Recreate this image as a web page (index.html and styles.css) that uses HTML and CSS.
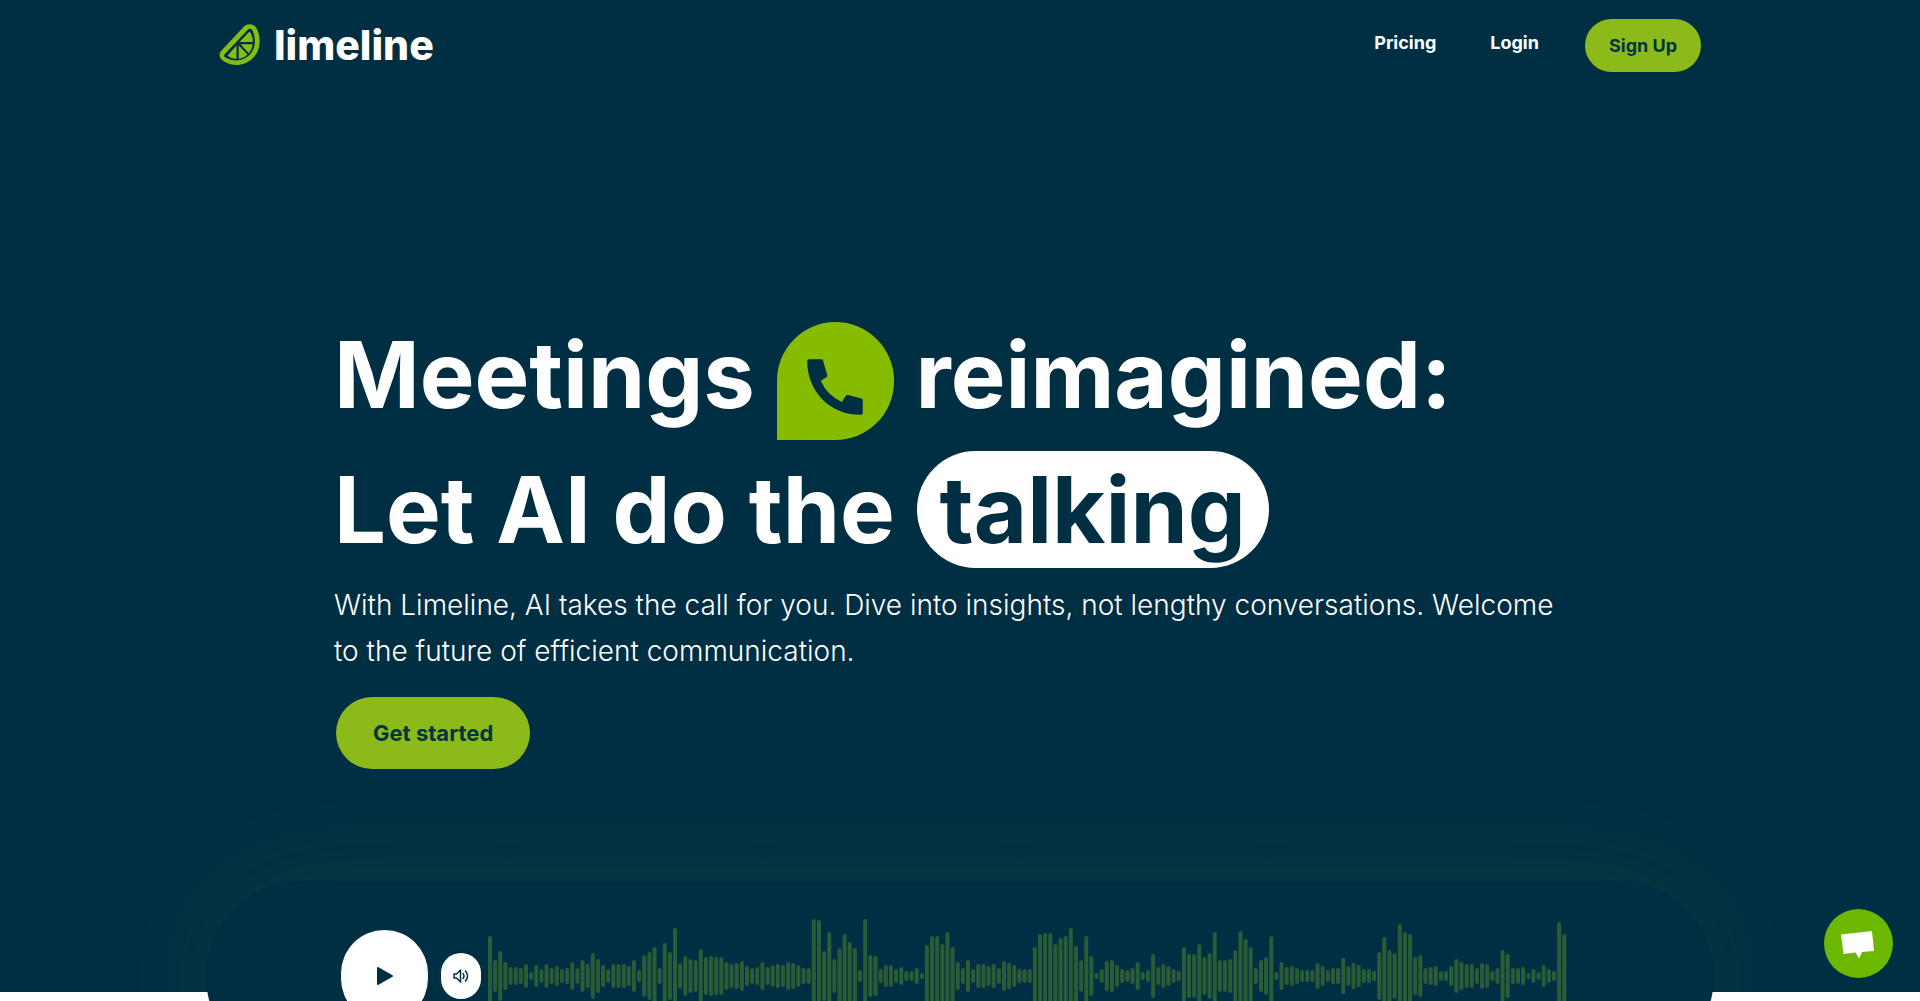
FILE: index.html
```html
<!DOCTYPE html>
<html lang="en">
<head>
    <meta charset="UTF-8">
    <meta name="viewport" content="width=device-width, initial-scale=1.0">
    <title>Limeline</title>

    <link rel="stylesheet" href="styles.css">
    <script src="waveform.js" defer></script>
</head>
<body>

    <header class="header">
        <a class="logo" href="#">
            <svg class="logo-icon" viewBox="0 0 42 42" aria-hidden="true">
                <path class="lime" d="M3 26 25 2.500C29-1 35-.5 38 5c4.500 10 3.500 22-4 29-8 8-19 9-28 4-6-3-7-8-3-12z"/>
                <path class="dark" d="M6 30 29 5.500C30.500 4 32.500 4.500 33.500 6.500c4 9 3 18-3 24.500-6 6-15.500 7-23 3C5 33 4.500 31.500 6 30z"/>
                <path class="lime" d="M20.500 18 30.500 7.500c2.500 3 3.500 7 3.300 10.500zM21.500 20.200H33.600c-.3 3.500-1.700 6.500-3.800 9zM17.500 21.500V34.800c-3.500 0-6.500-.8-9-3.300zM19.700 21.500l8.800 9c-2.500 2.500-5.500 4-8.800 4.300z"/>
            </svg>
            <span class="logo-text">limeline</span>
        </a>
        <nav class="nav">
            <a class="nav-link" href="#">Pricing</a>
            <a class="nav-link" href="#">Login</a>
            <a class="btn btn-small" href="#">Sign Up</a>
        </nav>
    </header>

    <main>
        <section class="hero">
            <h1>
                Meetings
                <span class="bubble"><svg viewBox="0 0 24 24" aria-hidden="true"><path d="M3.600 3H7.600Q8 3 8.100 3.400L9.500 8.200Q9.600 8.600 9.200 8.800L7.400 10Q9.500 14.800 14.200 16.900L15.500 14.900Q15.700 14.500 16.200 14.600L20.600 15.700Q21 15.800 21 16.200V20.400Q21 21 20.300 21C10 21 3 13 3 3.700Q3 3 3.600 3z"/></svg></span>
                reimagined:<br>
                Let AI do the <span class="pill">talking</span>
            </h1>
            <p class="lead">With Limeline, AI takes the call for you. Dive into insights, not lengthy conversations. Welcome to the future of efficient communication.</p>
            <button class="btn btn-large" type="button">Get started</button>
        </section>

        <section class="player">
            <button class="play" type="button" aria-label="Play">
                <svg viewBox="0 0 16 18" aria-hidden="true"><path d="M1 1v16l14-8z"/></svg>
            </button>
            <button class="volume" type="button" aria-label="Volume">
                <svg viewBox="0 0 16 14" aria-hidden="true"><path d="M1 5v4h2.500L7.500 13V1L3.500 5zM10 4.500q2 2.500 0 5M12.500 2q4 5 0 10"/></svg>
            </button>
            <svg class="wave" viewBox="0 0 1080 120" preserveAspectRatio="none" aria-hidden="true">
                <path id="wavePath"/>
            </svg>
        </section>
    </main>

    <div class="content"></div>

    <button class="chat" type="button" aria-label="Open chat">
        <svg viewBox="0 0 69 69" aria-hidden="true"><path d="M17 25.500 48 22l2 20-12 1-3 6.500-3.500-6L19.500 45z"/></svg>
    </button>

</body>
</html>
```
FILE: styles.css
```css
*{
    box-sizing: border-box;
}

body{
    margin: 0;
    height: 100vh;
    overflow: hidden;
    display: flex;
    flex-direction: column;
    background-color: #002e42;
    color: white;
    font-family: Inter, "Liberation Sans", sans-serif;
}

a{
    color: inherit;
    text-decoration: none;
}

button{
    border: none;
    padding: 0;
    font-family: inherit;
    cursor: pointer;
}

/* header */

.header{
    display: flex;
    justify-content: space-between;
    align-items: flex-start;
    width: 100%;
    max-width: 1482px;
    margin: 0 auto;
    padding-top: 19px;
}

.logo{
    display: flex;
    align-items: center;
    gap: 13px;
    height: 52px;
}

.logo-icon{
    width: 42px;
    height: 42px;
}

.lime{
    fill: #86bc16;
}

.dark{
    fill: #002e42;
}

.logo-text{
    font-size: 41px;
    font-weight: 800;
    line-height: 48px;
}

.nav{
    display: flex;
    align-items: flex-start;
}

.nav-link{
    margin-right: 54px;
    padding-top: 12px;
    font-size: 18px;
    font-weight: 700;
    line-height: 24px;
}

.nav-link:nth-child(2){
    margin-right: 46px;
}

.btn{
    display: flex;
    align-items: center;
    justify-content: center;
    background-color: #8cba1a;
    color: #00363c;
    font-weight: 700;
}

.btn-small{
    height: 53px;
    padding: 0 24px;
    border-radius: 27px;
    font-size: 18px;
}

.btn-large{
    height: 72px;
    margin: 23px 0 0 2px;
    padding: 0 37px;
    border-radius: 36px;
    font-size: 22px;
}

/* hero */

.hero{
    width: 100%;
    max-width: 1252px;
    margin: 0 auto;
    padding: 235px 0 112px;
}

h1{
    margin: 0 0 5px;
    font-size: 92px;
    font-weight: 700;
    line-height: 135px;
}

.bubble{
    display: inline-flex;
    align-items: center;
    justify-content: center;
    width: 117px;
    height: 118px;
    padding-top: 12px;
    vertical-align: -16px;
    background-color: #86bc00;
    border-radius: 59px 59px 59px 0;
}

.bubble svg{
    width: 74px;
    height: 74px;
    fill: #002e42;
}

.pill{
    padding: 3px 23px;
    border-radius: 59px;
    background-color: white;
    color: #002e42;
}

.lead{
    max-width: 1240px;
    margin: 0;
    font-size: 28px;
    font-weight: 300;
    line-height: 46px;
}

/* player */

.player{
    position: relative;
    display: flex;
    align-items: center;
    width: 100%;
    max-width: 1508px;
    height: 190px;
    margin: 0 auto -79px;
    padding: 0 147px 0 135px;
    border-radius: 95px;
    background-color: #002e42;
}

/* glow stays under the white section */
.player::before{
    content: "";
    position: absolute;
    inset: 0;
    z-index: -1;
    border-radius: 95px;
    box-shadow: 0 0 120px rgba(134, 188, 0, 0.09);
}

.play, .volume{
    display: flex;
    flex-shrink: 0;
    align-items: center;
    justify-content: center;
    background-color: white;
}

.play{
    width: 87px;
    height: 92px;
    margin-right: 13px;
    border-radius: 46px;
}

.play svg{
    width: 16px;
    height: 18px;
    fill: #002e42;
    stroke: #002e42;
    stroke-width: 2;
    stroke-linejoin: round;
}

.volume{
    width: 40px;
    height: 46px;
    margin-right: 6px;
    border-radius: 20px;
}

.volume svg{
    width: 16px;
    height: 14px;
    fill: none;
    stroke: #002e42;
    stroke-width: 1.5;
    stroke-linejoin: round;
    stroke-linecap: round;
}

.wave{
    flex: 1;
    min-width: 0;
    height: 120px;
    fill: none;
    stroke: #2a5d37;
    stroke-width: 4;
    stroke-linecap: round;
}

.content{
    flex: 1;
    background-color: white;
}

/* chat button */

.chat{
    position: fixed;
    right: 27px;
    bottom: 23px;
    width: 69px;
    height: 69px;
    border-radius: 50%;
    background-color: #6cb800;
}

.chat svg{
    display: block;
    fill: white;
}
```
FILE: waveform.js
```js
// half height of every bar
var bars = [
    40, 16, 25, 14, 9, 9, 8, 12, 4, 11, 7, 12, 8, 10, 7, 8, 14, 8, 16, 12,
    23, 17, 11, 7, 12, 12, 12, 10, 16, 6, 21, 24, 29, 8, 33, 24, 48, 13, 20, 17,
    16, 27, 19, 20, 19, 19, 14, 12, 13, 15, 10, 8, 9, 14, 9, 11, 12, 11, 14, 13,
    11, 8, 8, 57, 56, 25, 44, 17, 28, 42, 34, 28, 6, 57, 21, 20, 7, 11, 11, 7,
    9, 5, 5, 8, 3, 31, 40, 40, 32, 44, 29, 14, 8, 16, 7, 12, 12, 10, 12, 8,
    15, 13, 11, 7, 7, 7, 29, 42, 43, 43, 32, 38, 40, 48, 30, 16, 40, 20, 2, 7,
    15, 16, 11, 7, 6, 8, 14, 4, 6, 22, 9, 12, 10, 7, 5, 29, 22, 22, 32, 19,
    23, 44, 16, 16, 17, 26, 45, 37, 29, 8, 16, 19, 40, 4, 14, 9, 10, 8, 6, 6,
    6, 13, 10, 6, 8, 8, 18, 10, 13, 11, 7, 7, 5, 24, 39, 26, 23, 52, 44, 42,
    19, 21, 8, 9, 10, 5, 5, 10, 17, 14, 12, 12, 8, 13, 12, 5, 8, 26, 22, 8,
    8, 9, 2, 7, 4, 11, 7, 5, 54, 42
];

var step = 5.14;
var middle = 60;
var d = "";

for (var i = 0; i < bars.length; i++) {
    var half = Math.max(bars[i] - 2, 1);
    d += "M" + (3 + i * step) + " " + (middle - half) + "v" + (half * 2);
}

document.getElementById("wavePath").setAttribute("d", d);
```
